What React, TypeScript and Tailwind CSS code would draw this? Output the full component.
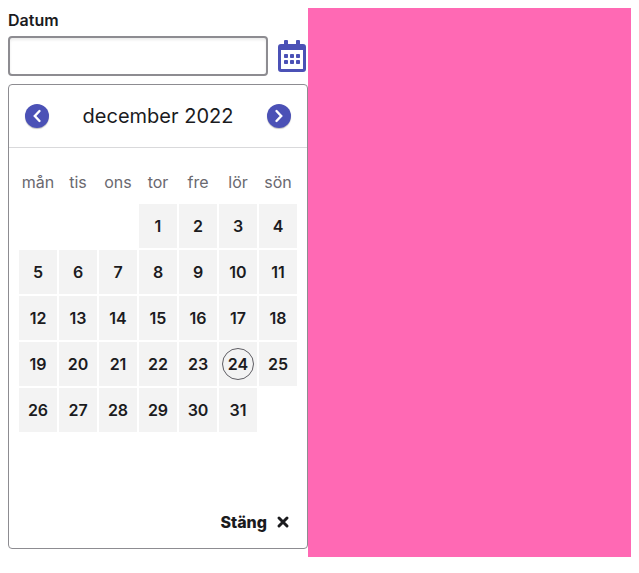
import React from "react";

const weekdays = ["mån", "tis", "ons", "tor", "fre", "lör", "sön"];
const firstWeekday = 3;
const daysInMonth = 31;
const today = 24;

const weeks = Array.from({ length: 6 }, (_, week) =>
  Array.from({ length: 7 }, (_, column) => {
    const day = week * 7 + column - firstWeekday + 1;
    return day >= 1 && day <= daysInMonth ? day : null;
  }),
);

function CalendarIcon() {
  return (
    <svg className="h-8 w-7" viewBox="0 0 28 32" fill="currentColor" aria-hidden="true">
      <path
        fillRule="evenodd"
        d="M7 0h2a1 1 0 0 1 1 1v3h8V1a1 1 0 0 1 1-1h2a1 1 0 0 1 1 1v3h3a3 3 0 0 1 3 3v22a3 3 0 0 1-3 3H3a3 3 0 0 1-3-3V7a3 3 0 0 1 3-3h3V1a1 1 0 0 1 1-1zM3 10v18.500a.5.5 0 0 0 .5.5h21a.5.5 0 0 0 .5-.5V10z"
      />
      {[14, 20].map((y) =>
        [6, 12, 18].map((x) => (
          <rect key={`${x}-${y}`} x={x} y={y} width="4" height="4" rx="0.8" />
        )),
      )}
    </svg>
  );
}

function NavButton({ label, points }: { label: string; points: string }) {
  return (
    <button
      type="button"
      aria-label={label}
      className="flex size-6 items-center justify-center rounded-full bg-[#4b51b6] text-white shadow-[0_1px_1px_rgba(0,0,0,0.25)]"
    >
      <svg
        className="size-6"
        viewBox="0 0 24 24"
        fill="none"
        stroke="currentColor"
        strokeWidth="2.4"
        strokeLinecap="round"
        aria-hidden="true"
      >
        <polyline points={points} />
      </svg>
    </button>
  );
}

function Calendar() {
  return (
    <section className="mt-2 rounded border border-[#8d8c91] bg-white">
      <header className="flex h-[63px] items-center justify-between border-b border-[#d9d9db] px-4">
        <NavButton label="Föregående månad" points="14.5,7 9.8,12 14.5,17" />
        <h2 className="text-xl font-normal">december 2022</h2>
        <NavButton label="Nästa månad" points="9.5,7 14.2,12 9.5,17" />
      </header>
      <div className="px-2 pt-3">
        <table className="w-full table-fixed border-separate border-spacing-[2px]">
          <thead>
            <tr>
              {weekdays.map((name) => (
                <th key={name} scope="col" className="h-10 p-0 text-center font-normal text-[#6a696f]">
                  {name}
                </th>
              ))}
            </tr>
          </thead>
          <tbody>
            {weeks.map((week, index) => (
              <tr key={index}>
                {week.map((day, column) => (
                  <td key={column} className="h-11 p-0">
                    {day !== null && (
                      <button
                        type="button"
                        className="flex h-11 w-full items-center justify-center bg-[#f3f3f3] font-semibold"
                      >
                        {day === today ? (
                          <span className="flex size-8 items-center justify-center rounded-full border border-[#5f5e64]">
                            {day}
                          </span>
                        ) : (
                          day
                        )}
                      </button>
                    )}
                  </td>
                ))}
              </tr>
            ))}
          </tbody>
        </table>
      </div>
      <footer className="flex justify-end px-4 pt-[30px] pb-[14px]">
        <button type="button" className="flex items-center gap-2 font-extrabold">
          Stäng
          <svg className="size-4" viewBox="0 0 16 16" stroke="currentColor" strokeWidth="3" strokeLinecap="round" aria-hidden="true">
            <path d="M4 4l8 8M12 4l-8 8" />
          </svg>
        </button>
      </footer>
    </section>
  );
}

export default function App() {
  return (
    <main className="flex p-2 font-['Inter',sans-serif] text-base text-[#1b1b1e]">
      <div className="w-[300px] shrink-0 pb-2">
        <label htmlFor="date" className="mb-1 block font-semibold">
          Datum
        </label>
        <div className="flex items-center gap-[10px]">
          <input
            id="date"
            type="text"
            className="h-10 w-[260px] rounded border-2 border-[#8d8c91] bg-white px-3 shadow-[inset_0_2px_3px_rgba(0,0,0,0.08)]"
          />
          <button type="button" aria-label="Välj datum" className="text-[#4b51b6]">
            <CalendarIcon />
          </button>
        </div>
        <Calendar />
      </div>
      <div className="flex-1 bg-[#ff69b4]" />
    </main>
  );
}
